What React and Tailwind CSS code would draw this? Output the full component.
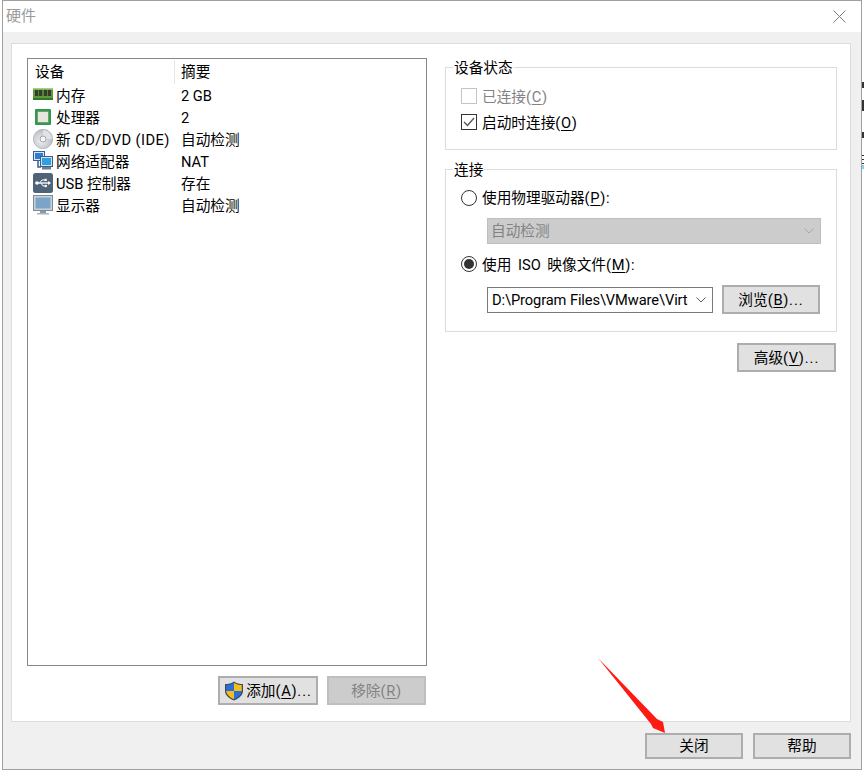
import React from "react";

const FONT = "font-['Roboto','Noto_Sans_CJK_SC',sans-serif]";

// мелкие иконки устройств
const RamIcon = () => (
  <svg width="20" height="20" viewBox="0 0 20 20">
    <rect x="0" y="3" width="20" height="10" fill="#5c9a3c" />
    <rect x="0" y="3" width="20" height="1.5" fill="#a5d183" />
    <rect x="2" y="5" width="3.2" height="6" fill="#3a3a2c" />
    <rect x="6" y="5" width="3.2" height="6" fill="#3a3a2c" />
    <rect x="10.8" y="5" width="3.2" height="6" fill="#3a3a2c" />
    <rect x="14.8" y="5" width="3.2" height="6" fill="#3a3a2c" />
    <rect x="0" y="13" width="20" height="2" fill="#2f7a2a" />
  </svg>
);

const CpuIcon = () => (
  <svg width="20" height="20" viewBox="0 0 20 20">
    <rect x="2" y="2" width="16" height="16" rx="1" fill="#2f9a4a" />
    <rect x="4.5" y="4.5" width="11" height="11" fill="#e6e6dc" stroke="#5f8a63" strokeWidth="0.6" />
  </svg>
);

const DiscIcon = () => (
  <svg width="20" height="20" viewBox="0 0 20 20">
    <defs>
      <radialGradient id="disc" cx="0.4" cy="0.6" r="0.7">
        <stop offset="0" stopColor="#eef0f2" />
        <stop offset="1" stopColor="#aeb3b9" />
      </radialGradient>
    </defs>
    <circle cx="10" cy="10" r="9.7" fill="url(#disc)" stroke="#9ea3a9" strokeWidth="0.6" />
    <path d="M10 1 A9 9 0 0 1 19 10 L13 10 A3 3 0 0 0 10 7 Z" fill="#dfe2e6" />
    <circle cx="10" cy="10" r="3" fill="#f6f6f6" stroke="#8f949a" strokeWidth="0.8" />
  </svg>
);

const NetIcon = () => (
  <svg width="20" height="20" viewBox="0 0 20 20">
    <rect x="0.5" y="0.5" width="11" height="9" fill="#dbe6f2" stroke="#35609a" />
    <rect x="2" y="2" width="8" height="6" fill="#2f7fd0" />
    <path d="M5 10v6h3" stroke="#35609a" strokeWidth="1.5" fill="none" />
    <rect x="7.5" y="5.5" width="12" height="10" fill="#d6e0ea" stroke="#3d5f86" />
    <rect x="9" y="7" width="9" height="7" fill="#2fa0e6" />
    <rect x="9" y="16" width="9" height="2.5" fill="#6c7f94" />
  </svg>
);

const UsbIcon = () => (
  <svg width="20" height="20" viewBox="0 0 20 20">
    <rect x="0" y="0" width="20" height="20" rx="2.5" fill="#4f6478" />
    <path d="M2.5 10h14" stroke="#fff" strokeWidth="1.3" />
    <circle cx="4" cy="10" r="1.7" fill="#fff" />
    <path d="M15 8l3 2-3 2z" fill="#fff" />
    <path d="M6.5 10l2.5-3h3M8 10l2 3h2" stroke="#fff" strokeWidth="1" fill="none" />
    <rect x="11.5" y="5.8" width="2.2" height="2.2" fill="#fff" />
    <circle cx="12.8" cy="13" r="1.2" fill="#fff" />
  </svg>
);

const MonitorIcon = () => (
  <svg width="20" height="20" viewBox="0 0 20 20">
    <rect x="0.5" y="0.5" width="19" height="15" fill="#c9d2da" stroke="#7c8a98" />
    <rect x="2.5" y="2.5" width="15" height="11" fill="#7ba4c8" />
    <rect x="7" y="16" width="6" height="2" fill="#8e9aa6" />
    <rect x="4" y="18" width="12" height="1.5" fill="#a9b3bc" />
  </svg>
);

const ShieldIcon = () => (
  <svg width="20" height="20" viewBox="0 0 20 20">
    <path d="M10 0.5 C7.5 2.5 4.5 3 1 3 V10 C1 14 5 17.5 10 19.5 C15 17.5 19 14 19 10 V3 C15.5 3 12.5 2.5 10 0.5 Z" fill="#3a4a60" />
    <path d="M10 1.8 C7.8 3.5 5 4 2.2 4.1 V10 H10 Z" fill="#2a6fd6" />
    <path d="M10 1.8 C12.2 3.5 15 4 17.8 4.1 V10 H10 Z" fill="#f6bd16" />
    <path d="M2.2 10 C2.4 13.4 5.8 16.4 10 18.2 V10 Z" fill="#f6bd16" />
    <path d="M17.8 10 C17.6 13.4 14.2 16.4 10 18.2 V10 Z" fill="#2a6fd6" />
  </svg>
);

const Chevron = ({ color = "#606060" }) => (
  <svg width="10" height="6" viewBox="0 0 10 6" fill="none">
    <path d="M0.5 0.5L5 5L9.5 0.5" stroke={color} />
  </svg>
);

const DEVICES = [
  { name: "内存", summary: "2 GB", icon: <RamIcon /> },
  { name: "处理器", summary: "2", icon: <CpuIcon /> },
  { name: "新 CD/DVD (IDE)", summary: "自动检测", icon: <DiscIcon />, nameClass: "tracking-[0.45px]" },
  { name: "网络适配器", summary: "NAT", icon: <NetIcon /> },
  { name: "USB 控制器", summary: "存在", icon: <UsbIcon /> },
  { name: "显示器", summary: "自动检测", icon: <MonitorIcon /> },
];

// (X) с подчёркнутой буквой, чуть шире как в Windows
const Mn = ({ k }) => (
  <span className="tracking-[0.7px]">
    (<span className="underline underline-offset-2">{k}</span>)
  </span>
);

const Dots = () => <span className="tracking-[1px]">...</span>;

const Group = ({ title, className, children }) => (
  <fieldset className={`border border-[#dcdcdc] ${className}`}>
    <legend className="ml-[7px] px-px h-[20px] text-[14.67px] leading-[20px] text-black">
      <span className="block mt-px">{title}</span>
    </legend>
    {children}
  </fieldset>
);

const Radio = ({ checked, children, className, labelClass = "" }) => (
  <div className={`flex items-center gap-[5px] pl-[15px] h-[20px] ${className}`}>
    <span className="flex items-center justify-center w-[16px] h-[16px] rounded-full border border-[#333] bg-white">
      {checked && <span className="w-[10px] h-[10px] rounded-full bg-[#333]" />}
    </span>
    <span className={labelClass}>{children}</span>
  </div>
);

const Btn = ({ disabled, className, children }) => (
  <button
    type="button"
    className={`flex items-center justify-center border-2 text-[14.67px] ${
      disabled ? "bg-[#cccccc] border-[#bfbfbf] text-[#838383]" : "bg-[#e1e1e1] border-[#adadad] text-black"
    } ${className}`}
  >
    {children}
  </button>
);

export default function App() {
  return (
    <div lang="zh-CN" className={`relative w-[864px] h-[772px] overflow-hidden bg-white flex ${FONT} text-[14.67px] text-black`}>
      {/* окно */}
      <div className="ml-[2px] w-[860px] h-[770px] border border-[#a0a0a0] bg-[#f0f0f0] flex flex-col">
        <div className="h-[31px] shrink-0 bg-white flex items-center justify-between pl-[3px] pr-[15px]">
          <span className="text-[#999999] text-[15px]">硬件</span>
          <svg width="13" height="13" viewBox="0 0 13 13" stroke="#7a7a7a" strokeWidth="1">
            <path d="M0.5 0.5L12.5 12.5M12.5 0.5L0.5 12.5" />
          </svg>
        </div>

        {/* белая панель */}
        <div className="ml-[8px] mt-[11px] w-[840px] h-[679px] shrink-0 bg-white border border-[#dcdcdc] flex pl-[15px] pt-[14px] gap-[18px]">
          <div className="w-[400px] flex flex-col">
            <div className="h-[608px] border border-[#828790] bg-white">
              <div className="flex h-[25px] items-center">
                <div className="w-[147px] pl-[7px] h-[24px] flex items-center border-r border-[#e5e5e5]">
                  <span>设备</span>
                </div>
                <div className="pl-[6px]">摘要</div>
              </div>
              {DEVICES.map((d) => (
                <div key={d.name} className="flex h-[22px] items-center leading-[22px]">
                  <div className="w-[147px] flex items-center pl-[5px] gap-[3px] whitespace-nowrap">
                    {d.icon}
                    <span className={`mt-[2px] ${d.nameClass || ""}`}>{d.name}</span>
                  </div>
                  <div className="pl-[6px] mt-[2px]">{d.summary}</div>
                </div>
              ))}
            </div>
            <div className="flex justify-end gap-[9px] mt-[10px] pr-px">
              <Btn className="w-[100px] h-[29px] gap-[2px]">
                <ShieldIcon />
                <span>添加<Mn k="A" /><Dots /></span>
              </Btn>
              <Btn disabled className="w-[99px] h-[29px]">
                <span>移除<Mn k="R" /></span>
              </Btn>
            </div>
          </div>

          {/* правая колонка */}
          <div className="w-[392px] flex flex-col">
            <div className="-mt-px flex flex-col">
              <Group title="设备状态" className="h-[93px]">
                <div className="flex items-center gap-[5px] pl-[15px] h-[20px] mt-[9px] text-[#838383]">
                  <span className="w-[16px] h-[16px] border border-[#c4c4c4] bg-white" />
                  <span className="mt-[2px]">已连接<Mn k="C" /></span>
                </div>
                <div className="flex items-center gap-[5px] pl-[15px] h-[20px] mt-[6px]">
                  <span className="w-[16px] h-[16px] border border-[#333] bg-white flex items-center justify-center">
                    <svg width="12" height="10" viewBox="0 0 12 10" fill="none">
                      <path d="M1 5l3.5 3.5L11 1" stroke="#555" strokeWidth="1.3" />
                    </svg>
                  </span>
                  <span className="mt-[2px]">启动时连接<Mn k="O" /></span>
                </div>
              </Group>
              <Group title="连接" className="h-[173px] mt-[9px]">
                <Radio className="mt-[9px]">使用物理驱动器<Mn k="P" />:</Radio>
                <div className="ml-[41px] mt-[10px] w-[334px] h-[26px] bg-[#cccccc] border border-[#bfbfbf] flex items-center justify-between pl-[3px] pr-[6px] text-[#838383]">
                  <span>自动检测</span>
                  <Chevron color="#a8a8a8" />
                </div>
                <Radio checked className="mt-[10px]" labelClass="mt-[2px] [word-spacing:3px]">使用 ISO 映像文件<Mn k="M" />:</Radio>
                <div className="ml-[41px] mt-[11px] flex items-center gap-[9px]">
                  <div className="w-[226px] h-[26px] bg-white border border-[#7a7a7a] flex items-center pl-[4px] pr-[6px] justify-between">
                    <span className="w-[196px] overflow-hidden whitespace-nowrap tracking-[-0.1px]">D:\Program Files\VMware\Virtu</span>
                    <Chevron />
                  </div>
                  <Btn className="w-[98px] h-[29px]">
                    <span>浏览<Mn k="B" /><Dots /></span>
                  </Btn>
                </div>
              </Group>
            </div>
            <div className="flex justify-end mt-[11px] pr-px">
              <Btn className="w-[99px] h-[29px]">
                <span>高级<Mn k="V" /><Dots /></span>
              </Btn>
            </div>
          </div>
        </div>

        {/* нижние кнопки */}
        <div className="flex justify-end gap-[10px] mt-[11px] pr-[10px]">
          <Btn className="w-[98px] h-[26px]">关闭</Btn>
          <Btn className="w-[98px] h-[26px]">帮助</Btn>
        </div>
      </div>

      {/* кусочки фона справа от окна */}
      <span className="absolute left-[862px] top-[82px] w-[2px] h-[6px] bg-[#333333]" />
      <span className="absolute left-[862px] top-[100px] w-[2px] h-[11px] bg-[#333333]" />
      <span className="absolute left-[862px] top-[132px] w-[2px] h-[6px] bg-[#333333]" />
      <span className="absolute left-[862px] top-[155px] w-[2px] h-px bg-[#333333]" />
      <span className="absolute left-[862px] top-[159px] w-[2px] h-px bg-[#333333]" />
      <span className="absolute left-[862px] top-[163px] w-[2px] h-px bg-[#333333]" />
      <span className="absolute left-[862px] top-[165px] w-[2px] h-[4px] bg-[#7fd4ea]" />

      {/* красная стрелка поверх */}
      <svg className="absolute left-[590px] top-[650px]" width="90" height="90" viewBox="0 0 90 90">
        <path d="M8 8L67 69L73 72L75 83L63 78L61 74Z" fill="#ff1a14" />
      </svg>
    </div>
  );
}
